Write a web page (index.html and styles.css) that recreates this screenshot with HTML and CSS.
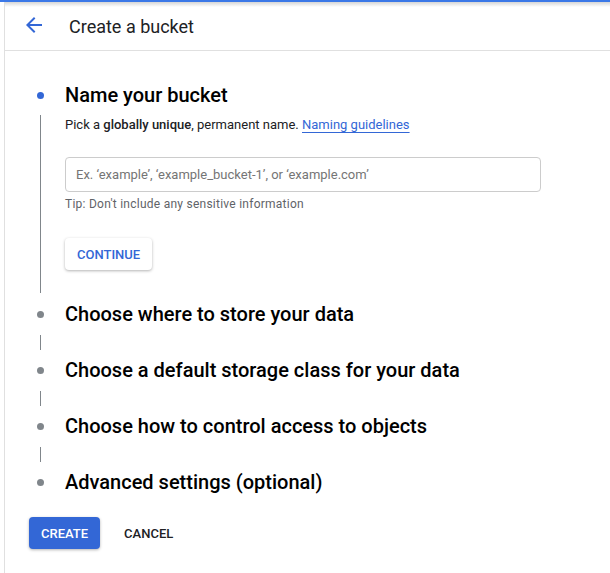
FILE: index.html
```html
<!DOCTYPE html>
<html lang="en">

<head>
    <meta charset="UTF-8">
    <title>Create a bucket</title>

    <link rel="stylesheet" href="styles.css">
</head>

<body>
<div class="topbar"></div>
<div class="app">
    <div class="header">
        <svg class="back" width="16" height="16" viewBox="0 0 16 16">
            <path d="M16 7H3.8l5.6-5.6L8 0 0 8l8 8 1.4-1.4L3.8 9H16z" fill="#3367d6"/>
        </svg>
        <h1 class="title">Create a bucket</h1>
    </div>

    <div class="steps">
        <!-- active step -->
        <div class="step">
            <div class="mark"><span class="dot active"></span></div>
            <h2 class="step-title">Name your bucket</h2>
            <div class="rail long"><span class="line"></span></div>
            <div class="step-body">
                <p class="hint">Pick a <b>globally unique</b>, permanent name. <a href="#">Naming guidelines</a></p>
                <input class="name-input" type="text" placeholder="Ex. ‘example’, ‘example_bucket-1’, or ‘example.com’">
                <p class="tip">Tip: Don't include any sensitive information</p>
                <button class="continue">Continue</button>
            </div>
        </div>

        <div class="step">
            <div class="mark"><span class="dot"></span></div>
            <h2 class="step-title">Choose where to store your data</h2>
            <div class="rail"><span class="line"></span></div>
            <div></div>
        </div>

        <div class="step">
            <div class="mark"><span class="dot"></span></div>
            <h2 class="step-title">Choose a default storage class for your data</h2>
            <div class="rail"><span class="line"></span></div>
            <div></div>
        </div>

        <div class="step">
            <div class="mark"><span class="dot"></span></div>
            <h2 class="step-title">Choose how to control access to objects</h2>
            <div class="rail"><span class="line"></span></div>
            <div></div>
        </div>

        <div class="step">
            <div class="mark"><span class="dot"></span></div>
            <h2 class="step-title">Advanced settings (optional)</h2>
        </div>
    </div>

    <div class="actions">
        <button class="create">Create</button>
        <button class="cancel">Cancel</button>
    </div>
</div>
</body>

</html>
```

FILE: styles.css
```css
body {
    margin: 0;
    background-color: #fff;
    font-family: Roboto, "Liberation Sans", sans-serif;
    color: #202124;
}

.topbar {
    height: 2px;
    background-color: #3b78e7;
}

.app {
    margin-left: 4px;
    border-left: 1px solid #e0e0e0;
    min-height: 571px;
}

.header {
    display: flex;
    align-items: center;
    gap: 27px;
    height: 48px;
    padding-left: 21px;
    border-bottom: 1px solid #e0e0e0;
    background: linear-gradient(#d6d6d6 0, #fff 5px);
}

.back {
    display: block;
    margin-top: -2px;
}

.title {
    margin: 0;
    font-size: 18px;
    font-weight: 400;
    color: #202124;
}

.steps {
    padding: 28px 0 0 24px;
}

.step {
    display: grid;
    grid-template-columns: 22px 1fr;
    column-gap: 14px;
}

.mark {
    display: flex;
    align-items: center;
    justify-content: center;
    height: 32px;
}

.dot {
    width: 7px;
    height: 7px;
    border-radius: 50%;
    background-color: #80868b;
}

.dot.active {
    background-color: #3367d6;
}

.step-title {
    margin: 0;
    height: 32px;
    line-height: 32px;
    font-size: 20px;
    font-weight: 500;
    color: #000;
}

.rail {
    display: flex;
    justify-content: center;
    height: 24px;
}

.rail .line {
    width: 1px;
    margin: 5px 0 4px;
    background-color: #80868b;
}

.rail.long {
    height: auto;
}

.rail.long .line {
    margin: 4px 0 5px;
}

.step-body {
    padding: 4px 0 28px;
}

.hint {
    margin: 0;
    font-size: 13px;
    line-height: 20px;
}

.hint b {
    font-weight: 500;
}

.hint a {
    color: #3367d6;
    text-decoration: underline;
    text-underline-offset: 3px;
}

.name-input {
    display: block;
    box-sizing: border-box;
    width: 476px;
    height: 35px;
    margin-top: 22px;
    padding: 0 10px;
    border: 1px solid #ccc;
    border-radius: 4px;
    font-family: inherit;
    font-size: 13px;
    outline: none;
}

.name-input::placeholder {
    color: #757575;
}

.tip {
    margin: 4px 0 0;
    font-size: 12px;
    line-height: 16px;
    letter-spacing: 0.25px;
    color: #5f6368;
}

button {
    height: 32px;
    padding: 0 12px;
    font-family: inherit;
    font-size: 13px;
    font-weight: 500;
    text-transform: uppercase;
    border: none;
    border-radius: 4px;
    cursor: pointer;
}

.continue {
    margin-top: 26px;
    color: #3367d6;
    background-color: #fff;
    box-shadow: 0 1px 3px rgba(0, 0, 0, 0.3);
}

.actions {
    display: flex;
    gap: 12px;
    padding: 19px 0 0 24px;
}

.create {
    color: #fff;
    background-color: #3367d6;
    box-shadow: 0 1px 3px rgba(0, 0, 0, 0.3);
}

.cancel {
    color: #202124;
    background-color: transparent;
}
```
